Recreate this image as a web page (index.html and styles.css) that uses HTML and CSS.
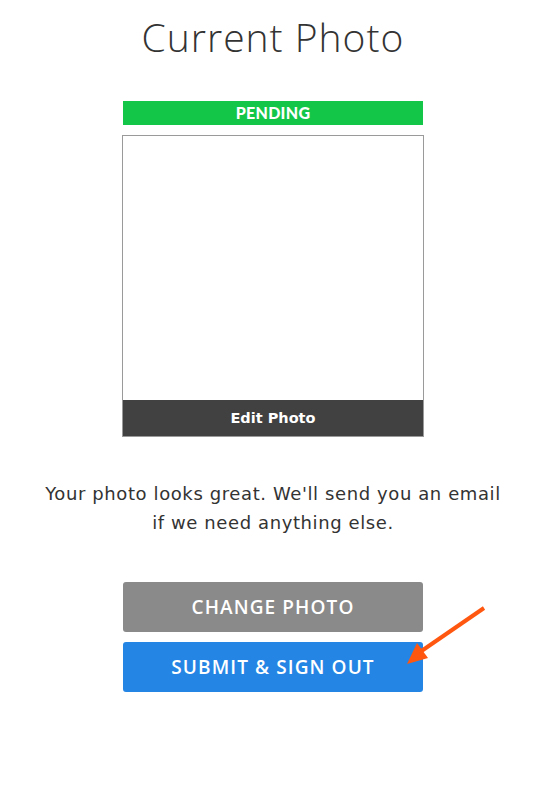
FILE: index.html
```html
<!DOCTYPE html>
<html>
<head>
<meta charset="utf-8">
<link rel="stylesheet" href="styles.css">
</head>
<body>
<main class="page">
  <h1 class="title">Current Photo</h1>
  <div class="status">PENDING</div>
  <div class="photo">
    <div class="photo-area"></div>
    <div class="edit">Edit Photo</div>
  </div>
  <p class="message">Your photo looks great. We'll send you an email if we need anything else.</p>
  <div class="actions">
    <button class="btn btn-gray">CHANGE PHOTO</button>
    <button class="btn btn-blue">SUBMIT &amp; SIGN OUT</button>
  </div>
  <svg class="arrow" width="100" height="80" viewBox="0 0 100 80">
    <line x1="89" y1="13" x2="25" y2="57" stroke="#ff570f" stroke-width="4" stroke-linecap="butt"/>
    <polygon points="12,69 22,48 33,63" fill="#ff570f"/>
  </svg>
</main>
</body>
</html>
```

FILE: styles.css
```css
html, body {
  margin: 0;
  padding: 0;
  background: #fff;
}
.page {
  position: relative;
  width: 546px;
  min-height: 810px;
  display: flex;
  flex-direction: column;
  align-items: center;
  font-family: "DejaVu Sans", sans-serif;
  color: #333;
}
.title {
  margin: 12px 0 0;
  font-family: "Open Sans", sans-serif;
  font-size: 39px;
  font-weight: 300;
  line-height: 50px;
  letter-spacing: 1px;
  color: #333;
}
.status {
  margin-top: 39px;
  width: 300px;
  height: 24px;
  background: #14c648;
  color: #fff;
  font-family: "Lato", sans-serif;
  font-weight: 900;
  font-size: 16px;
  line-height: 24px;
  text-align: center;
  letter-spacing: 0.3px;
}
.photo {
  margin-top: 10px;
  width: 300px;
  height: 300px;
  border: 1px solid #9a9a9a;
  display: flex;
  flex-direction: column;
  background: #fff;
}
.photo-area {
  flex: 1;
}
.edit {
  height: 36px;
  background: #414141;
  color: #fff;
  font-weight: 700;
  font-size: 14.5px;
  line-height: 36px;
  text-align: center;
}
.message {
  margin: 42px 0 0;
  width: 462px;
  font-size: 18px;
  letter-spacing: 0.6px;
  line-height: 29px;
  text-align: center;
  color: #333;
}
.actions {
  margin-top: 45px;
  display: flex;
  flex-direction: column;
  gap: 10px;
}
.btn {
  width: 300px;
  height: 50px;
  border: none;
  border-radius: 3px;
  color: #fff;
  font-family: "Open Sans", sans-serif;
  font-weight: 600;
  font-size: 19px;
  letter-spacing: 1.1px;
  padding: 0;
}
.btn-gray { background: #8a8a8a; }
.btn-blue { background: #2485e5; }
.arrow {
  position: absolute;
  left: 395px;
  top: 595px;
}
```
